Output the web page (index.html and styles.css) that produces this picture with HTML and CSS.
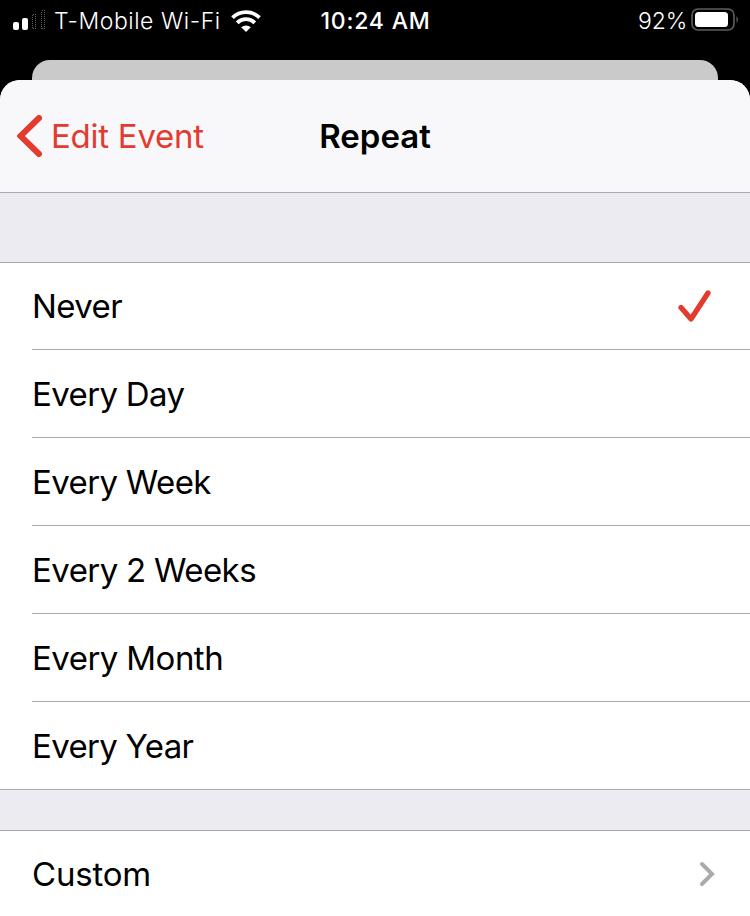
FILE: index.html
```html
<!DOCTYPE html>
<html lang="en">
<head>
<meta charset="utf-8">
<title>Repeat</title>
<link rel="stylesheet" href="styles.css">
</head>
<body>
<header class="status">
  <div class="carrier">
    <svg class="signal" width="33" height="20" viewBox="0 0 33 20"><g fill="#fff"><rect x="0" y="12" width="6" height="8" rx="2"/><rect x="9" y="8" width="6" height="12" rx="2"/></g><g fill="none" stroke="#606060" stroke-dasharray="1 1"><path d="M19.500 5v14M22.500 4v15M28.500 2v17M31.500 0v19M20 4.500h3M29 .5h3M20 18.500h3M29 18.500h3"/></g></svg>
    <span class="network">T-Mobile Wi-Fi</span>
    <svg class="wifi" width="30" height="22" viewBox="0 0 30 22"><g fill="none" stroke="#fff" stroke-width="3.800"><path d="M1.500 7.700a19.200 19.200 0 0 1 27 0"/><path d="M6.200 12.800a12.500 12.500 0 0 1 17.600 0"/></g><path fill="#fff" d="M15 22l-4.800-4.700a7 7 0 0 1 9.600 0z"/></svg>
  </div>
  <time class="time">10:24 AM</time>
  <div class="power"><span class="percent">92%</span>
    <svg class="battery" width="48" height="23" viewBox="0 0 48 23"><rect x="1" y="1" width="42" height="21" rx="6" fill="none" stroke="#5e5e5e" stroke-width="1.600"/><rect x="4" y="4" width="33" height="15" rx="3.500" fill="#fff"/><path d="M45.500 8q3 3.500 0 7z" fill="#5e5e5e"/></svg>
  </div>
</header>
<div class="behind"></div>
<main class="sheet">
  <nav class="nav">
    <a class="back"><svg width="25" height="42" viewBox="0 0 25 42"><path d="M22 3L3.500 21L22 39" fill="none" stroke="#e33b30" stroke-width="6" stroke-linecap="round"/></svg><span class="back-label">Edit Event</span></a>
    <h1 class="title">Repeat</h1>
  </nav>
  <ul class="list">
    <li class="row first"><span class="label">Never</span><svg class="check" width="34" height="34" viewBox="0 0 34 34"><path d="M4 18.500L14 30L31 4" fill="none" stroke="#e33b30" stroke-width="5.300" stroke-linecap="round" stroke-linejoin="round"/></svg></li>
    <li class="row"><span class="label">Every Day</span></li>
    <li class="row"><span class="label">Every Week</span></li>
    <li class="row"><span class="label weeks">Every 2 Weeks</span></li>
    <li class="row"><span class="label month">Every Month</span></li>
    <li class="row"><span class="label year">Every Year</span></li>
  </ul>
  <ul class="list custom-list">
    <li class="row"><span class="label custom">Custom</span><svg class="chevron" width="16" height="26" viewBox="0 0 16 26"><path d="M3 3l10 10L3 23" fill="none" stroke="#ababab" stroke-width="4" stroke-linecap="round"/></svg></li>
  </ul>
</main>
</body>
</html>
```
FILE: styles.css
```css
* { box-sizing: border-box; }
body { margin: 0; height: 916px; overflow: hidden; background: #000; color: #000; font-family: Inter, sans-serif; }
svg { display: block; flex: none; }
.status { height: 60px; padding: 0 11px 0 13px; display: grid; grid-template-columns: 1fr auto 1fr; color: #fff; font-size: 23px; line-height: 42px; white-space: nowrap; }
.carrier, .power { display: flex; align-items: center; height: 42px; }
.signal { margin: 0 8px 2px 0; }
.network { letter-spacing: .55px; font-weight: 350; }
.wifi { margin: 0 0 1px 10px; }
.time { font-weight: 500; letter-spacing: .8px; margin-right: 1px; }
.power { justify-content: flex-end; gap: 4px; }
.percent { letter-spacing: -.2px; font-weight: 350; }
.battery { margin-bottom: 3px; }
.behind { height: 20px; margin: 0 32px; border-radius: 18px 18px 0 0; background: #cacaca; }
.sheet { height: 836px; background: #ebebf1; border-radius: 20px 20px 0 0; overflow: hidden; }
.nav { height: 113px; padding: 0 17px; display: grid; grid-template-columns: 1fr auto 1fr; align-items: center; background: #f8f8fa; border-bottom: 1px solid #aaaaae; }
.back { display: flex; align-items: center; gap: 9px; color: #e33b30; font-size: 33px; }
.back-label { letter-spacing: -.25px; word-spacing: 0; }
.title { margin: 0; font-size: 33px; font-weight: 600; }
.list { list-style: none; margin: 69px 0 0; padding: 0 0 0 32px; background: #fff; border: solid #aaaaae; border-width: 1px 0; }
.row { height: 88px; display: flex; align-items: center; justify-content: space-between; padding-right: 39px; font-size: 33px; border-bottom: 1px solid #aaaaae; }
.row.first { height: 87px; }
.row:last-child { height: 87px; border-bottom: 0; }
.label { letter-spacing: -.6px; word-spacing: -.3px; }
.weeks { letter-spacing: -.55px; word-spacing: -.4px; }
.month { letter-spacing: -.52px; }
.year { letter-spacing: -.65px; }
.custom { letter-spacing: -.2px; }
.custom-list { margin-top: 40px; }
.custom-list .row { height: 86px; padding-right: 35px; }
```
